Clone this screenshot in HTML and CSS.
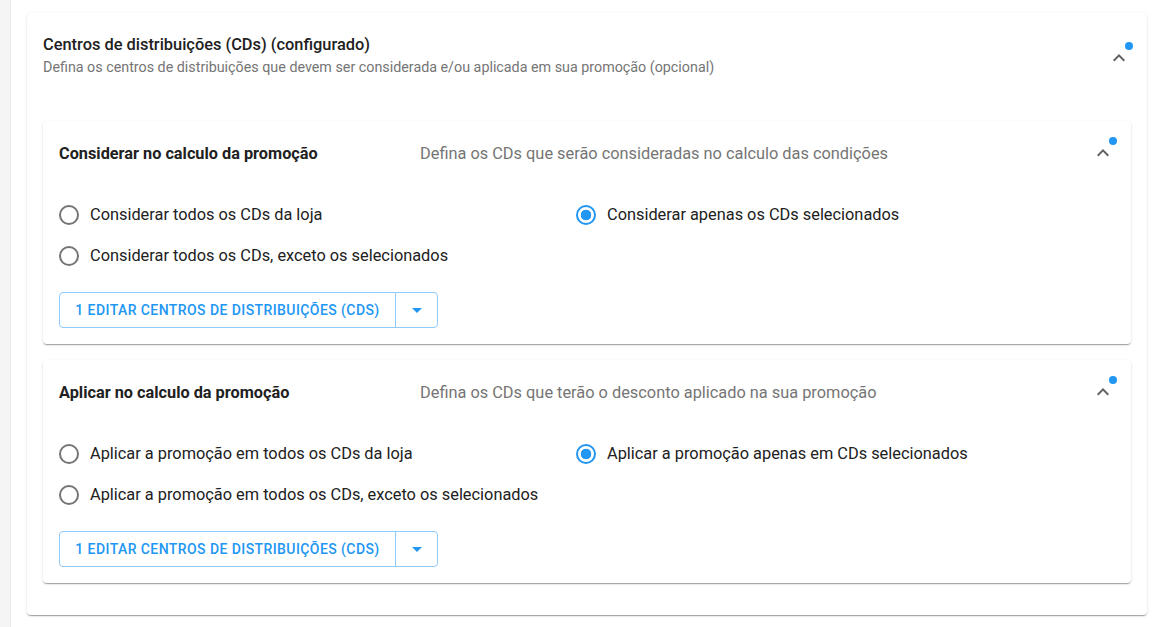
FILE: index.html
```html
<!DOCTYPE html>
<html lang="pt-BR">
	<head>
		<meta charset="UTF-8" />
		<title>Centros de distribuições</title>
		<link rel="stylesheet" href="styles.css">
	</head>
	<body>
		<div class="side"></div>
		<main class="main">
			<section class="panel">
				<div class="panel-head">
					<div>
						<div class="panel-title">Centros de distribuições (CDs) (configurado)</div>
						<div class="panel-sub">Defina os centros de distribuições que devem ser considerada e/ou aplicada em sua promoção (opcional)</div>
					</div>
					<span class="toggle">
						<svg viewBox="0 0 24 24" width="24" height="24"><path d="M7.41 15.41L12 10.83l4.59 4.58L18 14l-6-6-6 6z" /></svg>
						<i class="dot"></i>
					</span>
				</div>

				<div class="card">
					<div class="card-head">
						<div class="card-title">Considerar no calculo da promoção</div>
						<div class="card-desc">Defina os CDs que serão consideradas no calculo das condições</div>
						<span class="toggle">
							<svg viewBox="0 0 24 24" width="24" height="24"><path d="M7.41 15.41L12 10.83l4.59 4.58L18 14l-6-6-6 6z" /></svg>
							<i class="dot"></i>
						</span>
					</div>
					<div class="options">
						<label class="radio"><span class="circle"></span>Considerar todos os CDs da loja</label>
						<label class="radio checked"><span class="circle"></span>Considerar apenas os CDs selecionados</label>
						<label class="radio"><span class="circle"></span>Considerar todos os CDs, exceto os selecionados</label>
					</div>
					<div class="split-btn">
						<button class="btn-main">1 Editar centros de distribuições (CDs)</button>
						<button class="btn-caret"><i class="caret"></i></button>
					</div>
				</div>

				<div class="card">
					<div class="card-head">
						<div class="card-title">Aplicar no calculo da promoção</div>
						<div class="card-desc">Defina os CDs que terão o desconto aplicado na sua promoção</div>
						<span class="toggle">
							<svg viewBox="0 0 24 24" width="24" height="24"><path d="M7.41 15.41L12 10.83l4.59 4.58L18 14l-6-6-6 6z" /></svg>
							<i class="dot"></i>
						</span>
					</div>
					<div class="options">
						<label class="radio"><span class="circle"></span>Aplicar a promoção em todos os CDs da loja</label>
						<label class="radio checked"><span class="circle"></span>Aplicar a promoção apenas em CDs selecionados</label>
						<label class="radio"><span class="circle"></span>Aplicar a promoção em todos os CDs, exceto os selecionados</label>
					</div>
					<div class="split-btn">
						<button class="btn-main">1 Editar centros de distribuições (CDs)</button>
						<button class="btn-caret"><i class="caret"></i></button>
					</div>
				</div>
			</section>
		</main>
	</body>
</html>
```

FILE: styles.css
```css
html,
body {
	height: 100%;
}
body {
	margin: 0;
	display: flex;
	font-family: Roboto, "Liberation Sans", sans-serif;
	color: #212121;
	background: #fff;
}
.side {
	width: 10px;
	flex-shrink: 0;
	background: #f5f5f5;
	border-right: 1px solid #ececec;
}
.main {
	flex: 1;
	padding: 13px 12px 0 16px;
}

.panel {
	background: #fff;
	border-radius: 4px;
	padding: 0 16px 32px 16px;
	box-shadow: 0 2px 1px -1px rgba(0, 0, 0, 0.2), 0 1px 1px 0 rgba(0, 0, 0, 0.14),
		0 1px 3px 0 rgba(0, 0, 0, 0.12);
}
.panel-head {
	display: flex;
	justify-content: space-between;
	align-items: center;
	height: 108px;
	box-sizing: border-box;
	padding-bottom: 24px;
}
.panel-title {
	font-size: 16.4px;
	font-weight: 500;
	line-height: 24px;
}
.panel-sub {
	font-size: 14.3px;
	color: #757575;
	line-height: 20px;
}

.toggle {
	position: relative;
	width: 24px;
	height: 24px;
	fill: #616161;
}
.toggle svg {
	display: block;
}
.dot {
	position: absolute;
	top: -4px;
	right: -2px;
	width: 8px;
	height: 8px;
	border-radius: 50%;
	background: #2196f3;
}
.panel-head .toggle {
	margin-top: 6px;
}

.card {
	background: #fff;
	border-radius: 4px;
	padding: 0 16px 16px 16px;
	margin-bottom: 16px;
	box-shadow: 0 2px 1px -1px rgba(0, 0, 0, 0.2), 0 1px 1px 0 rgba(0, 0, 0, 0.14),
		0 1px 3px 0 rgba(0, 0, 0, 0.12);
}
.card:last-child {
	margin-bottom: 0;
}
.card-head {
	display: grid;
	grid-template-columns: 361px 1fr auto;
	align-items: center;
	height: 64px;
}
.card-title {
	font-size: 16.3px;
	font-weight: 700;
}
.card-desc {
	font-size: 16.35px;
	color: #757575;
}

.options {
	display: grid;
	grid-template-columns: 517px 1fr;
	row-gap: 21px;
	padding-top: 20px;
}
.radio {
	display: flex;
	align-items: center;
	gap: 11px;
	font-size: 16.35px;
	line-height: 20px;
	cursor: pointer;
}
.circle {
	width: 16px;
	height: 16px;
	border: 2px solid #757575;
	border-radius: 50%;
	flex-shrink: 0;
	box-sizing: content-box;
}
.checked .circle {
	border-color: #2196f3;
	background: radial-gradient(circle, #2196f3 0 5px, #fff 5.6px);
}

.split-btn {
	display: inline-flex;
	margin-top: 26px;
	border: 1px solid #90caf9;
	border-radius: 4px;
	height: 36px;
	box-sizing: border-box;
}
.split-btn button {
	border: none;
	background: transparent;
	font-family: inherit;
	color: #2196f3;
	cursor: pointer;
	padding: 0;
}
.btn-main {
	font-size: 14px;
	font-weight: 500;
	text-transform: uppercase;
	letter-spacing: 0.03em;
	white-space: nowrap;
	width: 336px;
	border-right: 1px solid #90caf9 !important;
}
.btn-caret {
	width: 41px;
	display: flex;
	align-items: center;
	justify-content: center;
}
.caret {
	width: 0;
	height: 0;
	border-left: 5px solid transparent;
	border-right: 5px solid transparent;
	border-top: 5px solid #2196f3;
}
```
